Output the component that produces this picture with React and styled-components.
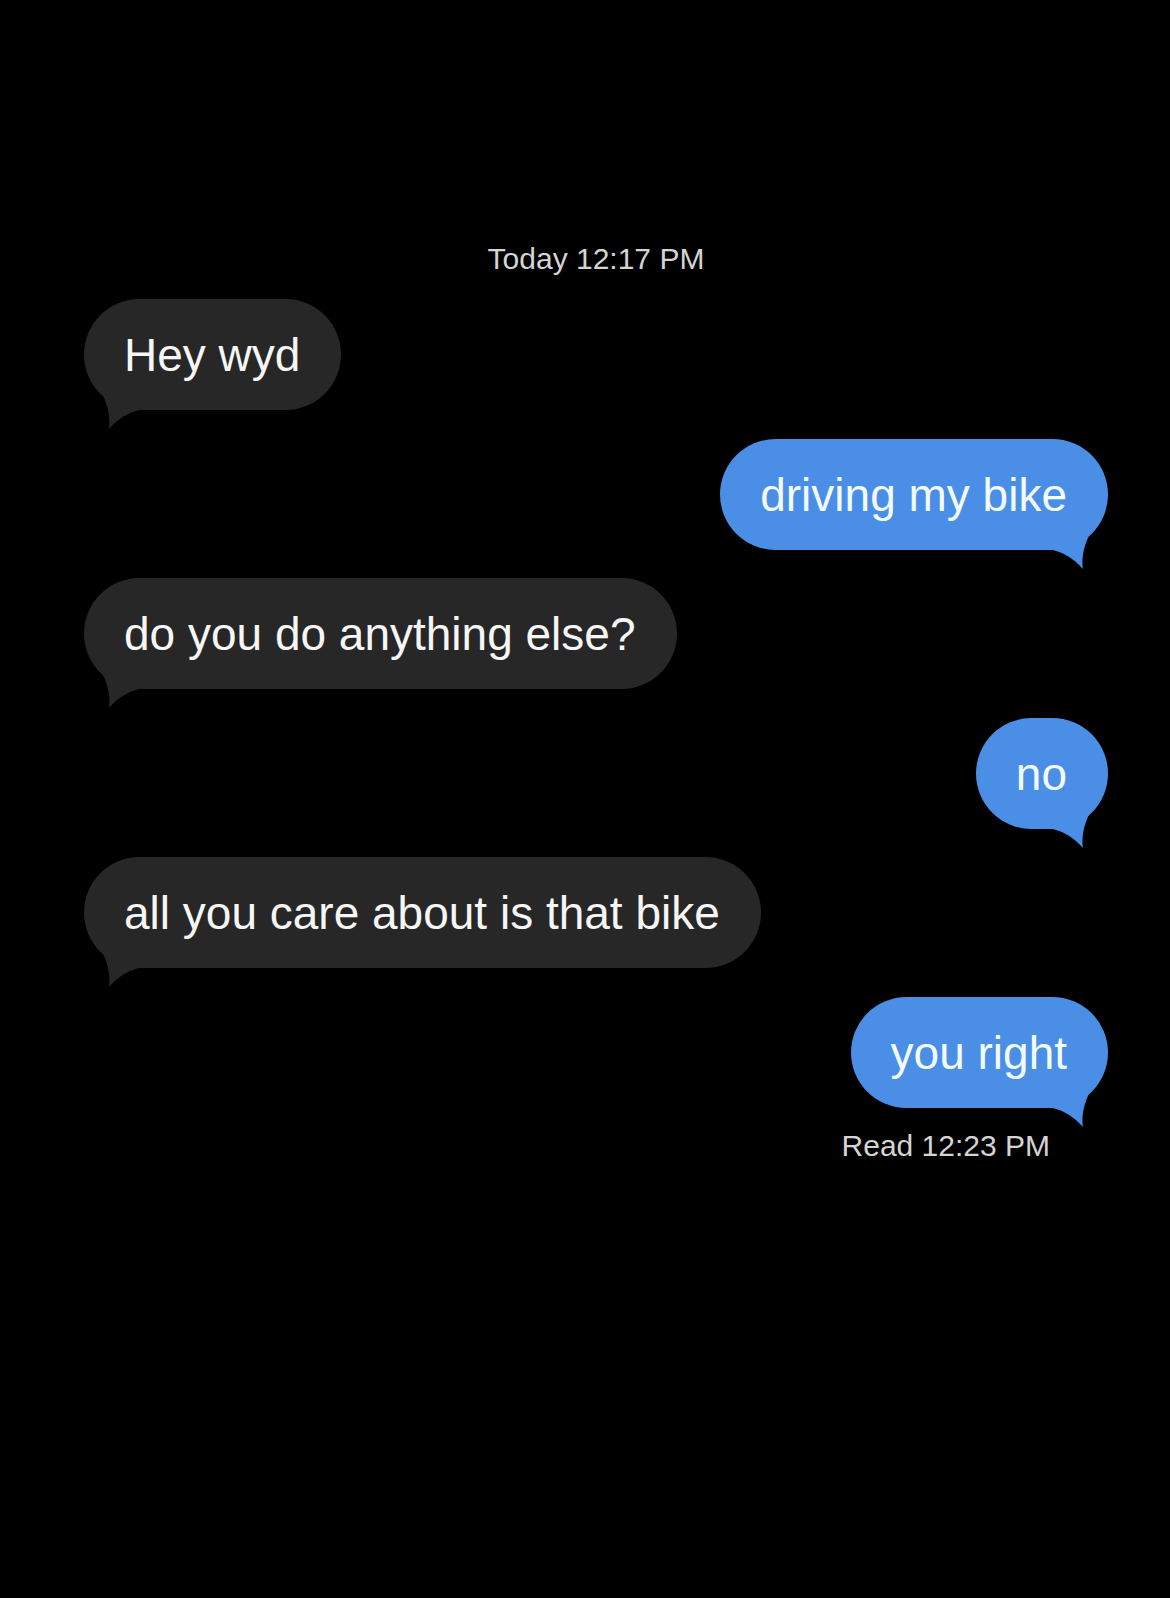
import React from "react";
import styled, { createGlobalStyle } from "styled-components";

const GlobalStyle = createGlobalStyle`
  html, body {
    margin: 0;
    padding: 0;
    background: #000;
  }
  body {
    font-family: "Liberation Sans", Arial, sans-serif;
  }
`;

const Screen = styled.div`
  min-height: 1598px;
  background: #000;
  padding: 242px 62px 0 84px;
  box-sizing: border-box;
  display: flex;
  flex-direction: column;
`;

const Meta = styled.div`
  font-size: 30px;
  line-height: 34px;
  color: #d4d4d4;
  text-align: ${(props) => props.$align || "center"};
  padding-right: ${(props) => (props.$align === "right" ? "58px" : "0")};
  margin-top: ${(props) => props.$top || 0}px;
`;

const Thread = styled.div`
  display: flex;
  flex-direction: column;
  gap: 28.6px;
  margin-top: 23px;
`;

const Row = styled.div`
  display: flex;
  justify-content: ${(props) => (props.$me ? "flex-end" : "flex-start")};
`;

const Bubble = styled.div`
  position: relative;
  box-sizing: border-box;
  height: 111px;
  padding: 28px 41px 27px 40px;
  border-radius: 56px;
  font-size: 46px;
  line-height: 56px;
  white-space: nowrap;
  background: ${(props) => (props.$me ? "#4a8ee5" : "#272727")};
  color: ${(props) => (props.$me ? "#f2fbff" : "#f6f6f6")};
`;

const Label = styled.span`
  position: relative;
`;

const TailSvg = styled.svg`
  position: absolute;
  bottom: -20px;
  width: 70px;
  height: 50px;
  ${(props) =>
    props.$me ? "right: 0;" : "left: 0; transform: scaleX(-1);"}
`;

const Tail = ({ me }) => (
  <TailSvg $me={me} viewBox="-70 -30 70 50">
    <path
      d="M -68,-2 C -46,0 -35,8 -25,19 C -27,6 -23,-14 -8,-30 L -68,-30 Z"
      fill={me ? "#4a8ee5" : "#272727"}
    />
  </TailSvg>
);

const messages = [
  { me: false, text: "Hey wyd" },
  { me: true, text: "driving my bike" },
  { me: false, text: "do you do anything else?" },
  { me: true, text: "no" },
  { me: false, text: "all you care about is that bike" },
  { me: true, text: "you right" },
];

const App = () => {
  return (
    <>
      <GlobalStyle />
      <Screen>
        <Meta>Today 12:17 PM</Meta>
        <Thread>
          {messages.map((m, i) => (
            <Row key={i} $me={m.me}>
              <Bubble $me={m.me}>
                <Tail me={m.me} />
                <Label>{m.text}</Label>
              </Bubble>
            </Row>
          ))}
        </Thread>
        <Meta $align="right" $top={21}>
          Read 12:23 PM
        </Meta>
      </Screen>
    </>
  );
};

export default App;
